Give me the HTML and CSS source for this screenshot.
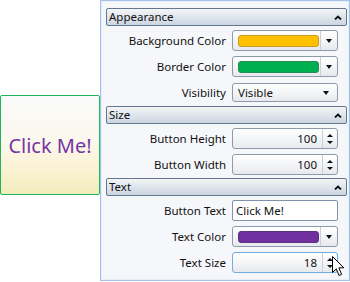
FILE: index.html
```html
<!DOCTYPE html>
<html lang="en">
  <head>
    <meta charset="UTF-8" />
    <title>Property Grid</title>
    <link rel="stylesheet" href="styles.css">
  </head>
  <body>
    <div class="preview">
      <div class="demo-button">Click Me!</div>
    </div>

    <div class="panel">
      <!-- Appearance -->
      <div class="section">
        <div class="header">
          <span>Appearance</span>
          <svg class="chev" width="8" height="5" viewBox="0 0 8 5"><path d="M1 4.5 L4 1.5 L7 4.5" fill="none" stroke="#111" stroke-width="1.8"/></svg>
        </div>
        <div class="row">
          <label>Background Color</label>
          <div class="editor combo">
            <div class="swatch yellow"></div>
            <div class="drop"><i class="tri-down"></i></div>
          </div>
        </div>
        <div class="row">
          <label>Border Color</label>
          <div class="editor combo">
            <div class="swatch green"></div>
            <div class="drop"><i class="tri-down"></i></div>
          </div>
        </div>
        <div class="row">
          <label>Visibility</label>
          <div class="editor select">
            <span>Visible</span>
            <i class="tri-down"></i>
          </div>
        </div>
      </div>

      <!-- Size -->
      <div class="section">
        <div class="header">
          <span>Size</span>
          <svg class="chev" width="8" height="5" viewBox="0 0 8 5"><path d="M1 4.5 L4 1.5 L7 4.5" fill="none" stroke="#111" stroke-width="1.8"/></svg>
        </div>
        <div class="row">
          <label>Button Height</label>
          <div class="editor spin">
            <span class="num">100</span>
            <div class="arrows"><i class="tri-up"></i><i class="tri-down small"></i></div>
          </div>
        </div>
        <div class="row">
          <label>Button Width</label>
          <div class="editor spin">
            <span class="num">100</span>
            <div class="arrows"><i class="tri-up"></i><i class="tri-down small"></i></div>
          </div>
        </div>
      </div>

      <!-- Text -->
      <div class="section">
        <div class="header">
          <span>Text</span>
          <svg class="chev" width="8" height="5" viewBox="0 0 8 5"><path d="M1 4.5 L4 1.5 L7 4.5" fill="none" stroke="#111" stroke-width="1.8"/></svg>
        </div>
        <div class="row">
          <label>Button Text</label>
          <div class="editor textbox">Click Me!</div>
        </div>
        <div class="row">
          <label>Text Color</label>
          <div class="editor combo">
            <div class="swatch purple"></div>
            <div class="drop"><i class="tri-down"></i></div>
          </div>
        </div>
        <div class="row">
          <label>Text Size</label>
          <div class="editor spin hover">
            <span class="num">18</span>
            <div class="arrows"><i class="tri-up"></i><i class="tri-down small"></i></div>
          </div>
        </div>
      </div>

      <!-- mouse pointer over the spinner -->
      <svg class="cursor" width="13" height="21" viewBox="0 0 13 21">
        <path d="M0.5 0.5 L0.5 16.5 L4.3 12.8 L7 19.5 L9.6 18.4 L6.9 11.8 L11.8 11.8 Z" fill="#fff" stroke="#000" stroke-width="1" stroke-linejoin="miter"/>
      </svg>
    </div>
  </body>
</html>
```

FILE: styles.css
```css
body {
  margin: 0;
  display: flex;
  align-items: flex-start;
  background: #fff;
  font-family: "Noto Sans", "Open Sans", sans-serif;
  font-size: 11.5px;
  color: #111;
}

/* left side: the button being edited */
.preview {
  width: 100px;
  padding-top: 95px;
}

.demo-button {
  box-sizing: border-box;
  width: 100px;
  height: 100px;
  border: 1px solid #1fb55a;
  border-radius: 2px;
  background: linear-gradient(#fafafa 0%, #fbf8ee 45%, #fbf3d8 70%, #f1edbb 100%);
  display: flex;
  align-items: center;
  justify-content: center;
  color: #7536a4;
  font-size: 20px;
}

/* property panel */
.panel {
  position: relative;
  box-sizing: border-box;
  width: 250px;
  height: 281px;
  padding: 7px 2px 0 5px;
  background: #f6f7fa;
  border: 1px solid #a4c3e6;
  box-shadow: inset 0 0 0 1px #e6eef8;
}

.section + .section {
  margin-top: 3px;
}

.header {
  box-sizing: border-box;
  height: 18px;
  display: flex;
  align-items: center;
  justify-content: space-between;
  padding: 0 4px 0 2px;
  border: 1px solid #61788f;
  border-radius: 2px;
  background: linear-gradient(#f3f5f8, #dfe5ec 50%, #cbd5e1);
}

.header span {
  line-height: 14px;
}

.row {
  display: flex;
  align-items: center;
  height: 21px;
  margin-top: 5px;
}

.header + .row {
  margin-top: 4px;
}

.row label {
  width: 126px;
  text-align: right;
  padding-right: 6px;
  box-sizing: border-box;
  white-space: nowrap;
}

.editor {
  box-sizing: border-box;
  width: 106px;
  height: 21px;
  border: 1px solid #8e9aab;
  border-radius: 3px;
  background: linear-gradient(#ffffff, #f4f5f7 50%, #e6e9ee);
  display: flex;
  align-items: center;
}

/* colour picker combo */
.combo {
  padding-left: 5px;
}

.swatch {
  box-sizing: border-box;
  width: 81px;
  height: 12px;
  border-radius: 3px;
}

.yellow { background: #ffc000; border: 1px solid #c79a2a; }
.green { background: #00b050; border: 1px solid #2a8a55; }
.purple { background: #7030a0; border: 1px solid #5a3480; }

.drop {
  margin-left: auto;
  width: 16px;
  height: 19px;
  border-left: 1px solid #c9d0d9;
  display: flex;
  align-items: center;
  justify-content: center;
}

.tri-down {
  width: 0;
  height: 0;
  border-left: 3.5px solid transparent;
  border-right: 3.5px solid transparent;
  border-top: 4px solid #111;
}

.tri-up {
  width: 0;
  height: 0;
  border-left: 3px solid transparent;
  border-right: 3px solid transparent;
  border-bottom: 3px solid #111;
}

.tri-down.small {
  border-left-width: 3px;
  border-right-width: 3px;
  border-top-width: 3px;
}

/* plain dropdown */
.select {
  height: 19px;
  padding: 0 8px 0 5px;
  justify-content: space-between;
}

/* numeric spinner */
.spin .num {
  flex: 1;
  text-align: right;
  padding-right: 5px;
}

.spin .arrows {
  width: 14px;
  height: 19px;
  border-left: 1px solid #c9d0d9;
  display: flex;
  flex-direction: column;
  align-items: center;
  justify-content: center;
  gap: 4px;
}

.spin.hover {
  border-color: #72ade2;
}

.textbox {
  background: #fff;
  border-color: #7f93aa;
  border-radius: 2px;
  padding-left: 3px;
}

.chev {
  display: block;
}

.cursor {
  position: absolute;
  left: 231px;
  top: 255px;
}
```
